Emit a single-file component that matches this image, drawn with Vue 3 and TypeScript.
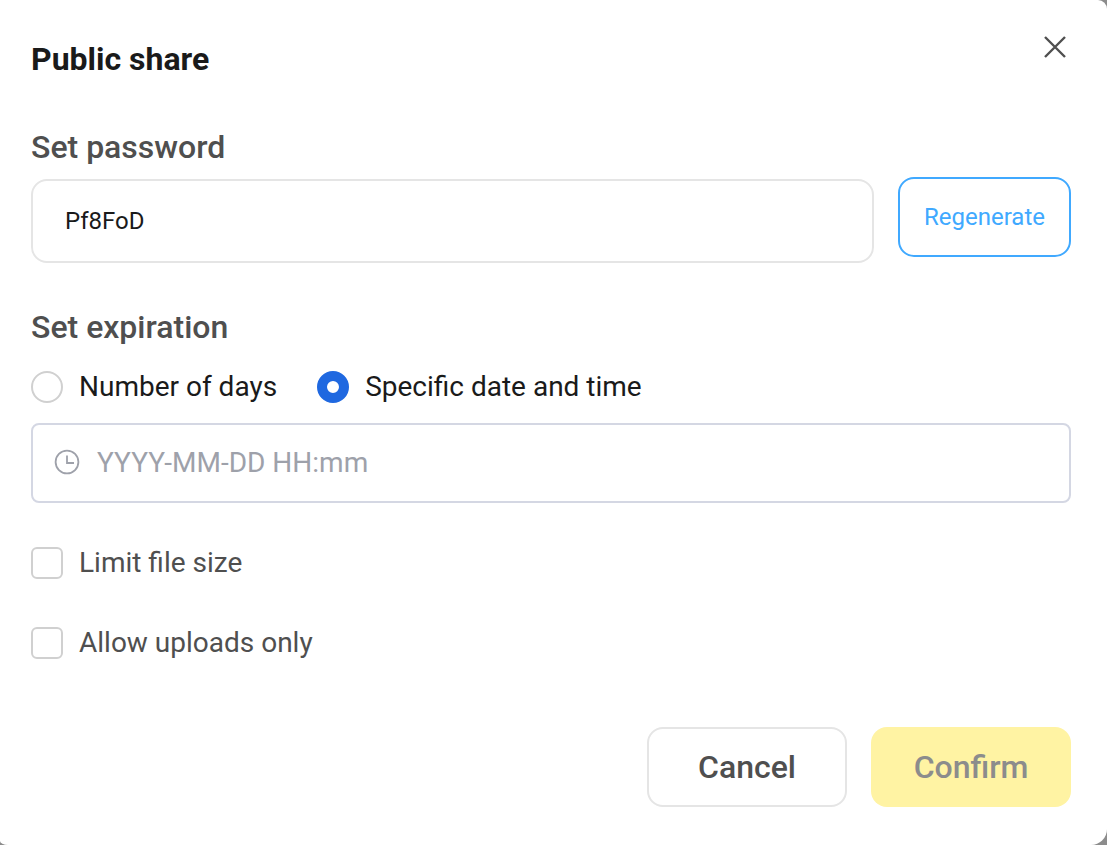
<script setup lang="ts">
import { ref } from "vue";

const password = ref("Pf8FoD");
const expiration = ref("date");
</script>

<template>
  <div class="modal">
    <header class="head">
      <h1>Public share</h1>
      <button class="close" aria-label="Close">
        <svg width="24" height="24" viewBox="0 0 24 24" fill="none">
          <path d="M2 2L22 22M22 2L2 22" stroke="#4f4f4f" stroke-width="2.4" />
        </svg>
      </button>
    </header>

    <h2 class="label first">Set password</h2>
    <div class="password-row">
      <div class="password">{{ password }}</div>
      <button class="regen">Regenerate</button>
    </div>

    <h2 class="label second">Set expiration</h2>
    <div class="radios">
      <label class="radio">
        <span class="dot"></span>
        Number of days
      </label>
      <label class="radio">
        <span :class="['dot', expiration === 'date' ? 'dot-on' : '']"></span>
        Specific date and time
      </label>
    </div>
    <div class="date">
      <svg width="26" height="26" viewBox="0 0 26 26" fill="none">
        <circle cx="13" cy="13" r="11.4" stroke="#9ea1aa" stroke-width="1.8" />
        <path d="M13 6.5V14H20" stroke="#9ea1aa" stroke-width="1.8" />
      </svg>
      <span>YYYY-MM-DD HH:mm</span>
    </div>

    <div class="checks">
      <label class="check"><span class="box"></span>Limit file size</label>
      <label class="check"><span class="box"></span>Allow uploads only</label>
    </div>

    <footer class="foot">
      <button class="btn cancel">Cancel</button>
      <button class="btn confirm">Confirm</button>
    </footer>
  </div>
</template>

<style>
html,
body {
  margin: 0;
  background: #8c8c8c;
}
</style>

<style scoped>
.modal {
  box-sizing: border-box;
  width: 1107px;
  height: 845px;
  padding: 0 36px 0 31px;
  background: #fff;
  border-radius: 0 9px 16px 8px / 0 9px 16px 4px;
  font-family: Roboto, "Liberation Sans", sans-serif;
  overflow: hidden;
}

.head {
  height: 112px;
  display: flex;
  justify-content: space-between;
  align-items: flex-start;
}

h1 {
  margin: 40px 0 0;
  font-size: 32px;
  line-height: 38px;
  font-weight: 700;
  color: #1a1a1a;
}

.close {
  margin: 35px 4px 0 0;
  padding: 0;
  width: 24px;
  height: 24px;
  border: none;
  background: none;
}

.label {
  margin: 0;
  font-size: 32px;
  line-height: 44px;
  font-weight: 500;
  color: #4f4f4f;
}

.first {
  margin-top: 13px;
}

.second {
  margin-top: 42px;
}

.password-row {
  display: flex;
  gap: 24px;
  margin-top: 10px;
}

.password {
  flex: 1;
  height: 84px;
  box-sizing: border-box;
  display: flex;
  align-items: center;
  padding-left: 32px;
  border: 2px solid #e5e5e5;
  border-radius: 16px;
  font-size: 24px;
  color: #1a1a1a;
}

.regen {
  width: 173px;
  height: 80px;
  margin-top: -2px;
  box-sizing: border-box;
  border: 2px solid #40a9ff;
  border-radius: 16px;
  background: #fff;
  color: #40a9ff;
  font-family: inherit;
  font-size: 24px;
}

.radios {
  display: flex;
  gap: 40px;
  margin-top: 22px;
}

.radio,
.check {
  display: flex;
  align-items: center;
  gap: 16px;
  font-size: 28px;
  line-height: 32px;
  color: #1a1a1a;
}

.dot {
  box-sizing: border-box;
  width: 32px;
  height: 32px;
  border: 2px solid #d0d0d0;
  border-radius: 50%;
}

.dot-on {
  border: 10px solid #1f68e0;
  background: #fff;
}

.date {
  box-sizing: border-box;
  height: 80px;
  margin-top: 20px;
  padding-left: 21px;
  padding-bottom: 2px;
  display: flex;
  align-items: center;
  gap: 17px;
  border: 2px solid #d4d7e3;
  border-radius: 8px;
  font-size: 28px;
  color: #9ea1aa;
}

.checks {
  display: flex;
  flex-direction: column;
  gap: 48px;
  margin-top: 44px;
}

.check {
  color: #4f4f4f;
}

.box {
  box-sizing: border-box;
  width: 32px;
  height: 32px;
  border: 2px solid #d0d0d0;
  border-radius: 6px;
}

.foot {
  display: flex;
  justify-content: flex-end;
  gap: 24px;
  margin-top: 68px;
}

.btn {
  box-sizing: border-box;
  width: 200px;
  height: 80px;
  border-radius: 16px;
  font-family: inherit;
  font-size: 32px;
  font-weight: 500;
}

.cancel {
  border: 2px solid #e5e5e5;
  background: #fff;
  color: #4f4f4f;
}

.confirm {
  border: none;
  background: #fff3a3;
  color: #8c8c8c;
}
</style>
